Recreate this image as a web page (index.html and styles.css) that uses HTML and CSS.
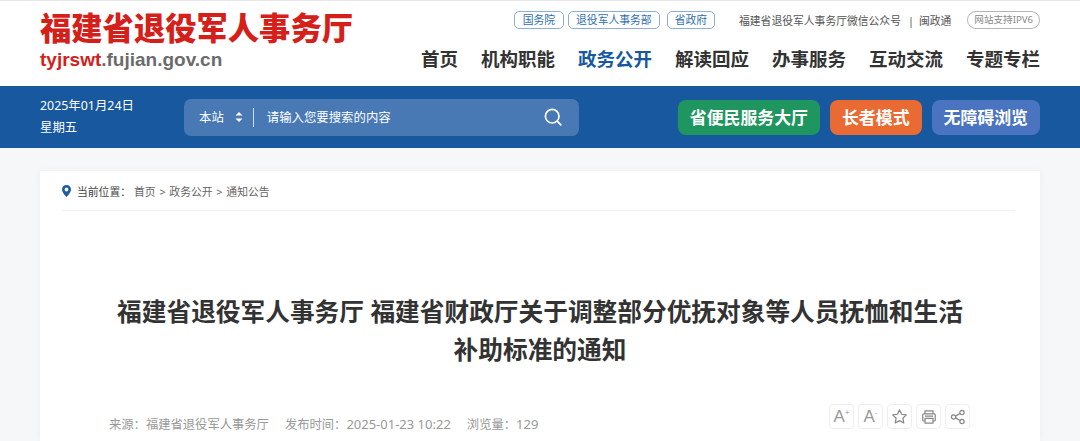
FILE: index.html
```html
<!DOCTYPE html>
<html lang="zh-CN">
<head>
    <meta charset="UTF-8">
    <title>福建省退役军人事务厅</title>
    <link rel="stylesheet" href="styles.css">
</head>
<body>
    <header class="header">
        <div class="logo">
            <div class="logo-name">福建省退役军人事务厅</div>
            <div class="logo-url"><span class="logo-red">tyjrswt</span>.fujian.gov.cn</div>
        </div>
        <div class="header-right">
            <div class="top-links">
                <a class="pill">国务院</a>
                <a class="pill">退役军人事务部</a>
                <a class="pill">省政府</a>
                <span class="top-text">福建省退役军人事务厅微信公众号</span>
                <span class="top-text top-sep">|</span>
                <span class="top-text">闽政通</span>
                <span class="ipv6">网站支持IPV6</span>
            </div>
            <nav class="nav">
                <a>首页</a>
                <a>机构职能</a>
                <a class="active">政务公开</a>
                <a>解读回应</a>
                <a>办事服务</a>
                <a>互动交流</a>
                <a>专题专栏</a>
            </nav>
        </div>
    </header>

    <div class="band">
        <div class="date">
            <div>2025年01月24日</div>
            <div>星期五</div>
        </div>
        <div class="search">
            <span class="scope">本站</span>
            <svg class="updown" width="8" height="12" viewBox="0 0 8 12"><path d="M4 1 7.500 4.600H.5zM4 11 .5 7.400h7z" fill="#fff"/></svg>
            <span class="search-sep"></span>
            <span class="placeholder">请输入您要搜索的内容</span>
            <svg class="search-icon" width="20" height="20" viewBox="0 0 20 20" fill="none" stroke="#fff" stroke-width="1.7"><circle cx="9.200" cy="9.200" r="6.800"/><path d="m14.200 14.200 3.600 3.600" stroke-linecap="round"/></svg>
        </div>
        <div class="band-btns">
            <a class="btn btn-green">省便民服务大厅</a>
            <a class="btn btn-orange">长者模式</a>
            <a class="btn btn-blue">无障碍浏览</a>
        </div>
    </div>

    <main class="card">
        <div class="crumb">
            <svg class="pin" width="9" height="12" viewBox="0 0 9 12"><path fill-rule="evenodd" d="M4.500 0C2 0 0 2 0 4.400 0 7.400 4.500 12 4.500 12S9 7.400 9 4.400C9 2 7 0 4.500 0zm0 2.600a1.900 1.900 0 1 1 0 3.800 1.900 1.900 0 0 1 0-3.800z" fill="#1a5ba3"/></svg>
            <span class="crumb-label">当前位置：</span>
            <span class="crumb-path">首页 &gt; 政务公开 &gt; 通知公告</span>
        </div>
        <h1 class="title">福建省退役军人事务厅 福建省财政厅关于调整部分优抚对象等人员抚恤和生活<br>补助标准的通知</h1>
        <div class="meta">
            <div class="meta-text">
                <span>来源：福建省退役军人事务厅</span>
                <span>发布时间：<span class="num">2025-01-23 10:22</span></span>
                <span>浏览量：<span class="num">129</span></span>
            </div>
            <div class="tools">
                <a class="tool"><span class="tool-a">A<sup>+</sup></span></a>
                <a class="tool"><span class="tool-a">A<sup>-</sup></span></a>
                <a class="tool"><svg width="17" height="17" viewBox="0 0 18 18" fill="none" stroke="#888" stroke-width="1.300" stroke-linejoin="round"><path d="M9 2l2.200 4.600 5 .7-3.600 3.500.9 5L9 13.400l-4.500 2.400.9-5L1.800 7.300l5-.7z"/></svg></a>
                <a class="tool"><svg width="16" height="16" viewBox="0 0 18 18" fill="none" stroke="#888" stroke-width="1.400" stroke-linejoin="round"><path d="M4.500 5V2h9v3M4.500 13.500H3a1 1 0 0 1-1-1v-6a1 1 0 0 1 1-1h12a1 1 0 0 1 1 1v6a1 1 0 0 1-1 1h-1.500"/><path d="M4.500 10.500h9V16h-9zM4.500 8h9"/></svg></a>
                <a class="tool"><svg width="16" height="16" viewBox="0 0 18 18" fill="none" stroke="#888" stroke-width="1.400"><circle cx="4" cy="9" r="2.400"/><circle cx="13.500" cy="4" r="2.400"/><circle cx="13.500" cy="14" r="2.400"/><path d="m6.200 8 5.100-2.900M6.200 10l5.100 2.900"/></svg></a>
            </div>
        </div>
    </main>
</body>
</html>
```

FILE: styles.css
```css
html, body {
    margin: 0;
    padding: 0;
}
body {
    height: 441px;
    overflow: hidden;
    background: #f6f7f8;
    font-family: "Noto Sans", "Noto Sans CJK SC", sans-serif;
    color: #333;
}
a {
    color: inherit;
    text-decoration: none;
}

/* header */
.header {
    height: 86px;
    box-sizing: border-box;
    border-top: 1px solid #e6e6e6;
    padding: 0 40px;
    background: #fff;
    display: flex;
    justify-content: space-between;
}
.logo {
    padding-top: 9px;
}
.logo-name {
    font-size: 31.3px;
    line-height: 36px;
    font-weight: 900;
    color: #d5201a;
    white-space: nowrap;
}
.logo-url {
    margin-top: 2px;
    font-family: "Liberation Sans", sans-serif;
    font-size: 19px;
    line-height: 24px;
    font-weight: 700;
    color: #6b6b6b;
}
.logo-red {
    color: #d5201a;
}
.header-right {
    display: flex;
    flex-direction: column;
    align-items: flex-end;
}
.top-links {
    display: flex;
    align-items: center;
    margin-top: 10px;
    font-size: 10.8px;
}
.pill {
    height: 16px;
    line-height: 16px;
    padding: 0 7px;
    margin-right: 7px;
    border: 1px solid #8fb0d6;
    border-radius: 5px;
    color: #2f6fb0;
}
.top-links .pill:nth-child(1) {
    padding: 0 8px;
    margin-right: 4px;
}
.top-links .pill:nth-child(3) {
    margin-right: 24px;
}
.top-text {
    color: #555;
}
.top-sep {
    margin: 0 5px 0 7px;
}
.ipv6 {
    height: 16px;
    line-height: 16px;
    margin-left: 16px;
    padding: 0 6px;
    border: 1px solid #b5b5b5;
    border-radius: 9px;
    font-size: 9.6px;
    color: #888;
}
.nav {
    display: flex;
    gap: 23px;
    margin-top: 15px;
    font-size: 18.5px;
    line-height: 30px;
    font-weight: 700;
    color: #333;
}
.nav .active {
    color: #17589f;
}

/* blue band */
.band {
    height: 62px;
    padding: 0 40px;
    background: #17589f;
    display: flex;
    align-items: center;
    color: #fff;
}
.date {
    width: 144px;
    font-size: 12.4px;
    line-height: 22px;
}
.search {
    width: 395px;
    height: 37px;
    box-sizing: border-box;
    padding: 0 16px 0 15px;
    background: #4879b5;
    border-radius: 7px;
    display: flex;
    align-items: center;
    font-size: 12.4px;
}
.updown {
    margin-left: 11px;
}
.search-sep {
    width: 1px;
    height: 19px;
    margin: 0 13px 0 10px;
    background: #cfdcec;
}
.placeholder {
    flex: 1;
}
.band-btns {
    margin-left: auto;
    display: flex;
    gap: 10px;
}
.btn {
    height: 35px;
    line-height: 35px;
    padding: 0 12px;
    border-radius: 8px;
    font-size: 16.9px;
    font-weight: 700;
    color: #fff;
}
.btn-green {
    background: #1f9660;
}
.btn-orange {
    background: #e96a33;
}
.btn-blue {
    background: #4a73c0;
}

/* article card */
.card {
    margin: 23px 40px 0;
    height: 270px;
    background: #fff;
    box-shadow: 0 0 8px rgba(0, 0, 0, 0.04);
}
.crumb {
    margin: 0 25px 0 22px;
    height: 39px;
    border-bottom: 1px solid #f0f0f0;
    display: flex;
    align-items: center;
    font-size: 10.8px;
    color: #666;
}
.pin {
    margin-right: 6px;
}
.crumb-label {
    color: #444;
    margin-right: 3px;
}
.crumb-path {
    word-spacing: 1px;
}
.title {
    margin: 82px 0 0;
    font-size: 24.7px;
    line-height: 38px;
    font-weight: 700;
    text-align: center;
    color: #333;
}
.meta {
    margin: 35px 70px 0 69px;
    display: flex;
    justify-content: space-between;
    align-items: flex-start;
}
.meta-text {
    margin-top: 11px;
    display: flex;
    gap: 16px;
    font-size: 12.3px;
    color: #999;
}
.num {
    font-size: 13px;
}
.tools {
    display: flex;
    gap: 4px;
}
.tool {
    width: 25px;
    height: 25px;
    box-sizing: border-box;
    border: 1px solid #eee;
    border-radius: 4px;
    display: flex;
    align-items: center;
    justify-content: center;
}
.tool-a {
    font-family: "Liberation Sans", sans-serif;
    font-size: 17px;
    color: #999;
}
.tool-a sup {
    font-size: 8px;
    line-height: 0;
}
```
